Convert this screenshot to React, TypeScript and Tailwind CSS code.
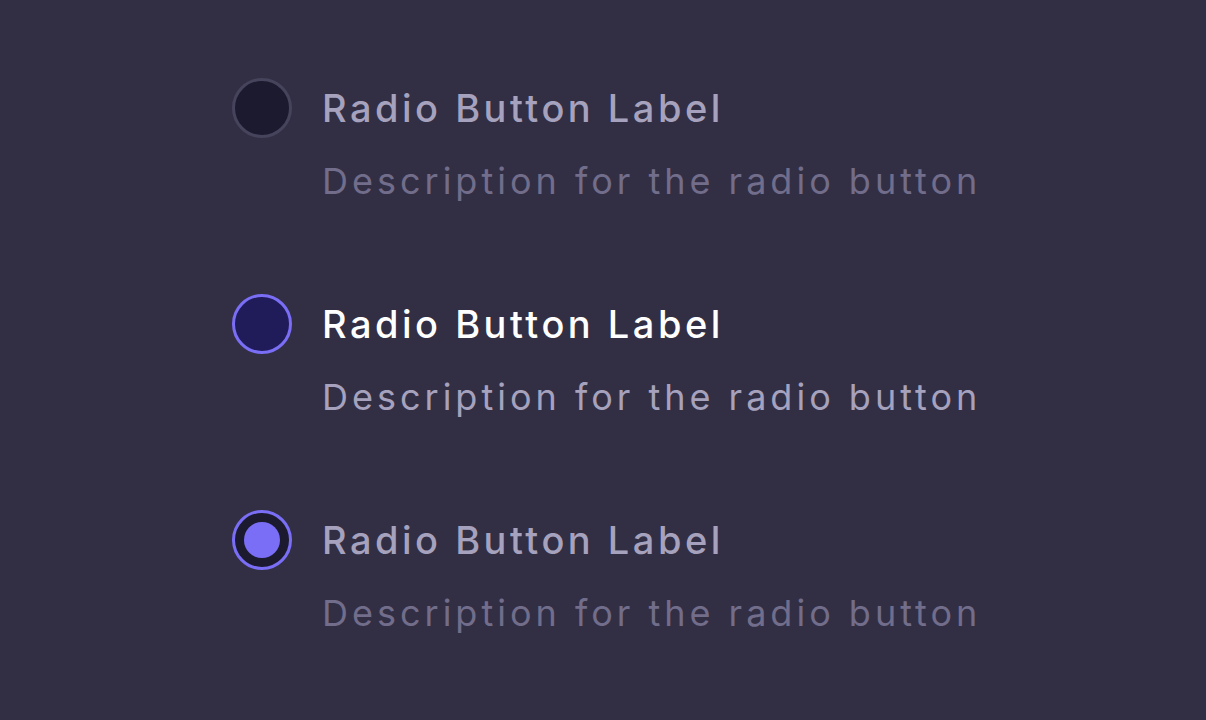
import React from 'react'

type Option = {
  id: string
  state: 'idle' | 'focus' | 'checked'
}

const options: Option[] = [
  { id: 'a', state: 'idle' },
  { id: 'b', state: 'focus' },
  { id: 'c', state: 'checked' },
]

const Radio = ({ state }: { state: Option['state'] }) => {
  if (state === 'idle')
    return <div className="w-[60px] h-[60px] rounded-full border-[3px] border-[#46435c] bg-[#1c1a2e] shrink-0" />
  if (state === 'focus')
    return <div className="w-[60px] h-[60px] rounded-full border-[3px] border-[#7b6ef6] bg-[#201b59] shrink-0" />
  return (
    <div className="w-[60px] h-[60px] rounded-full border-[3px] border-[#7b6ef6] bg-[#1c1a2e] shrink-0 flex items-center justify-center">
      <div className="w-[36px] h-[36px] rounded-full bg-[#7b6ef6]" />
    </div>
  )
}

const App = () => {
  return (
    <div
      className="w-full min-h-screen bg-[#322f45] pl-[232px] pt-[78px] flex flex-col gap-[93px]"
      style={{ fontFamily: 'Inter, "Noto Sans", sans-serif' }}
    >
      {options.map((opt) => (
        <div key={opt.id} className="flex items-start gap-[30px]">
          <Radio state={opt.state} />
          <div className="flex flex-col">
            <span
              className={`h-[60px] flex items-center text-[38px] font-medium tracking-[3.5px] whitespace-nowrap ${opt.state === 'focus' ? 'text-white' : 'text-[#a6a2bd]'}`}
            >
              Radio Button Label
            </span>
            <span
              className={`mt-[23px] h-[40px] flex items-center text-[36px] tracking-[4px] whitespace-nowrap ${opt.state === 'focus' ? 'text-[#a6a2bd]' : 'text-[#716d8a]'}`}
            >
              Description for the radio button
            </span>
          </div>
        </div>
      ))}
    </div>
  )
}

export default App
